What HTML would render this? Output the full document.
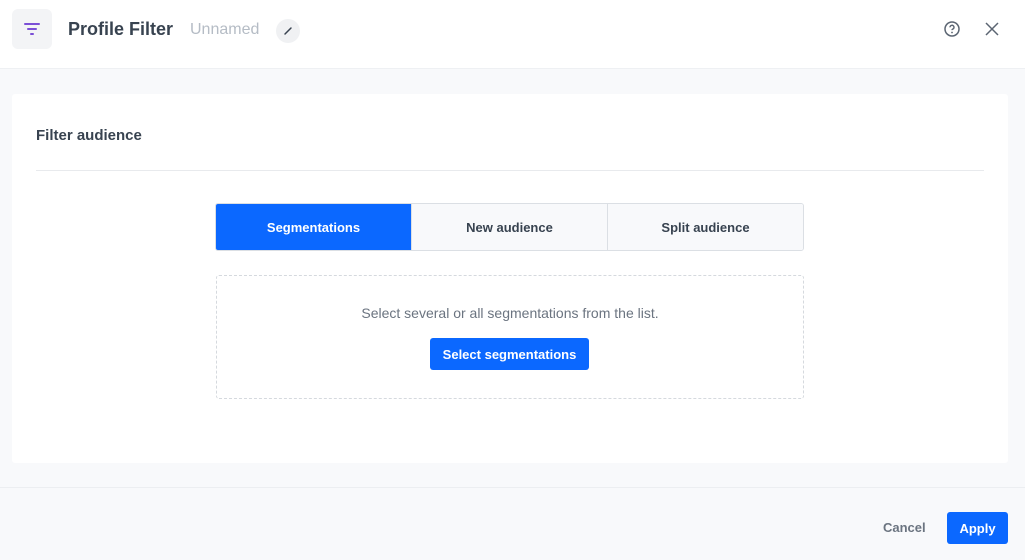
<!DOCTYPE html>
<html><head><style>
*{box-sizing:border-box;margin:0;padding:0}
body{width:1025px;height:560px;background:#f8f9fb;font-family:"Liberation Sans",sans-serif;position:relative;overflow:hidden}
.hdr{position:absolute;left:0;top:0;width:1025px;height:69px;background:#fff;border-bottom:1px solid #eef0f3}
.ic{position:absolute;left:12px;top:9px;width:40px;height:40px;background:#f3f4f6;border-radius:6px}
.t{position:absolute;left:68px;top:19px;font-size:18px;font-weight:bold;color:#384350}
.u{position:absolute;left:190px;top:21px;font-size:16px;color:#b5bcc5}
.ed{position:absolute;left:276px;top:19px;width:24px;height:24px;border-radius:50%;background:#f0f1f3}
.card{position:absolute;left:12px;top:94px;width:996px;height:369px;background:#fff;border-radius:3px}
.fa{position:absolute;left:24px;top:33px;font-size:15px;font-weight:bold;color:#384350}
.hr{position:absolute;left:24px;top:76px;width:948px;height:1px;background:#e8eaed}
.tabs{position:absolute;left:203px;top:109px;width:589px;height:48px;display:flex;border:1px solid #dbdfe4;border-radius:3px;overflow:hidden}
.tabs div{flex:1;display:flex;align-items:center;justify-content:center;font-size:13px;font-weight:bold;color:#384350;background:#f8f9fb;border-left:1px solid #dbdfe4}
.tabs div.a{background:#0b68ff;color:#fff;border-left:none}
.box{position:absolute;left:204px;top:181px;width:588px;height:124px;border:1px dashed #d5d9de;border-radius:3px}
.box p{position:absolute;top:29px;width:100%;text-align:center;font-size:14px;color:#6b7480}
.btn{position:absolute;left:213px;top:62px;width:159px;height:32px;background:#0b68ff;color:#fff;border-radius:3px;font-size:13px;font-weight:bold;display:flex;align-items:center;justify-content:center}
.ft{position:absolute;left:0;top:487px;width:1025px;height:1px;background:#eceef1}
.cancel{position:absolute;left:883px;top:520px;font-size:13px;font-weight:bold;color:#6b7480}
.apply{position:absolute;left:947px;top:512px;width:61px;height:32px;background:#0b68ff;color:#fff;border-radius:3px;font-size:13px;font-weight:bold;display:flex;align-items:center;justify-content:center}
</style></head><body>
<div class="hdr">
<div class="ic"><svg width="40" height="40"><path d="M13 15h14M16 20h8M19 25h2" stroke="#7b4fd6" stroke-width="2" stroke-linecap="round"/></svg></div>
<div class="t">Profile Filter</div><div class="u">Unnamed</div>
<div class="ed"><svg width="24" height="24"><path d="M9 15l6-6" stroke="#384350" stroke-width="1.5" stroke-linecap="round"/></svg></div>
<svg style="position:absolute;left:942px;top:19px" width="20" height="20"><circle cx="10" cy="10" r="7" fill="none" stroke="#5b6572" stroke-width="1.5"/><path d="M8 8.3a2 2 0 1 1 2.5 1.9c-.4.2-.5.5-.5.9" fill="none" stroke="#5b6572" stroke-width="1.4"/><circle cx="10" cy="13.5" r=".9" fill="#5b6572"/></svg>
<svg style="position:absolute;left:983px;top:20px" width="18" height="18"><path d="M3 3l12 12M15 3L3 15" stroke="#5b6572" stroke-width="1.5"/></svg>
</div>
<div class="card">
<div class="fa">Filter audience</div><div class="hr"></div>
<div class="tabs"><div class="a">Segmentations</div><div>New audience</div><div>Split audience</div></div>
<div class="box"><p>Select several or all segmentations from the list.</p><div class="btn">Select segmentations</div></div>
</div>
<div class="ft"></div>
<div class="cancel">Cancel</div><div class="apply">Apply</div>
</body></html>
